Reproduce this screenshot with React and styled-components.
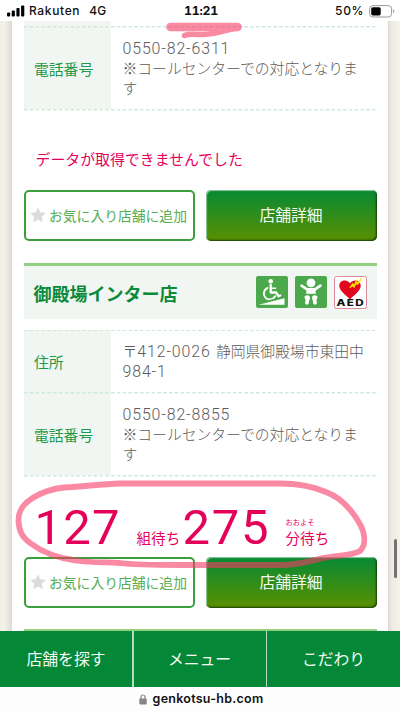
import React from 'react';
import styled, { createGlobalStyle } from 'styled-components';

const Global = createGlobalStyle`
  * { box-sizing: border-box; }
  body { margin: 0; background: #fff; font-family: "Noto Sans CJK JP", sans-serif; font-size: 14.8px; }
`;

const Screen = styled.div`
  position: relative;
  display: flex;
  flex-direction: column;
  width: 400px;
  height: 711px;
  overflow: hidden;
  background: #fff;
`;

const StatusBar = styled.header`
  display: grid;
  grid-template-columns: 1fr auto 1fr;
  align-items: center;
  flex: none;
  height: 21px;
  padding: 1px 5px 0 7px;
  font: 500 12px/20px Inter, sans-serif;
  color: #111;
`;
const Carrier = styled.div`
  display: flex;
  align-items: center;
  letter-spacing: 0.65px;
  span + span { margin-left: 9px; letter-spacing: 0.2px; }
  svg { margin-right: 4px; }
`;
const Clock = styled.div`
  font-weight: 700;
  font-size: 12.3px;
  font-feature-settings: "tnum";
  letter-spacing: -0.25px;
`;
const Power = styled.div`
  display: flex;
  justify-content: flex-end;
  align-items: center;
  gap: 5px;
  letter-spacing: 0.6px;
`;

const Viewport = styled.main`
  flex: none;
  height: 610px;
  overflow: hidden;
  padding: 0 12px;
  background: linear-gradient(90deg, #f3efe8, #f5f2eb 4px, #dedad3 12px, #dedad3 388px, #f0ece5 392px, #f5f2eb);
`;
const Page = styled.div`
  height: 610px;
  padding: 0 11.5px 0 11.5px;
  background: #fff;
`;

const Row = styled.div`
  display: grid;
  grid-template-columns: 87.5px 1fr;
  height: ${p => p.$h}px;
  position: relative;
`;
const DashLine = styled.svg`
  display: block;
  width: 100%;
  height: 1.5px;
  position: absolute;
  top: 0;
  left: 0;
`;
const Label = styled.div`
  display: flex;
  align-items: center;
  padding: 1px 0 0 10.5px;
  background: #f1f6f2;
  color: #1d9a4a;
`;
const Value = styled.div`
  display: flex;
  flex-direction: column;
  justify-content: center;
  padding: 0 0 0 11.5px;
  line-height: 20px;
  color: #5c5c5c;
  font-weight: 300;
  white-space: nowrap;
`;
const Line = styled.div`
  height: 20px;
  word-spacing: 2px;
`;
const Digits = styled.span`
  font-family: Roboto, sans-serif;
  font-size: 15.9px;
  font-weight: 300;
  letter-spacing: 0.88px;
`;

const Notice = styled.p`
  height: 80px;
  margin: 0;
  padding: 0 0 0 12px;
  font-size: 14.9px;
  line-height: 97px;
  color: #e5005a;
`;
const Actions = styled.div`
  display: grid;
  grid-template-columns: 171px 171px;
  justify-content: space-between;
  height: 51px;
`;
const FavoriteButton = styled.button`
  display: flex;
  align-items: center;
  gap: 3.5px;
  padding: 0 0 1px 4px;
  border: 2px solid #3b9f3c;
  border-radius: 5px;
  background: #fff;
  color: #54ad55;
  font: 400 13.8px/20px "Noto Sans CJK JP", sans-serif;
  white-space: nowrap;
  svg { flex: none; }
`;
const DetailButton = styled.button`
  padding: 0 0 1px;
  border: 0;
  border-radius: 5px;
  background: linear-gradient(#068a34, #5a9000);
  box-shadow: inset 1px 1px 1px #8cc99e, inset -1px -1px 2px #143c05;
  color: #f5faf2;
  font: 400 15.8px/20px "Noto Sans CJK JP", sans-serif;
`;

const ShopHeader = styled.div`
  display: flex;
  align-items: center;
  justify-content: space-between;
  height: 56px;
  margin: 21.5px 0 11px;
  padding: 1px 10px 0 10px;
  border-top: 3.5px solid #93cf83;
  background: #f1f6f2;
`;
const ShopName = styled.h2`
  margin: 0;
  font-size: 18px;
  line-height: 26px;
  font-weight: 700;
  color: #0b8a3a;
`;
const Icons = styled.div`
  display: flex;
  gap: 7px;
`;

const WaitInfo = styled.div`
  display: flex;
  align-items: flex-end;
  height: 81px;
  padding-left: 11px;
  color: #e5005a;
`;
const BigNumber = styled.div`
  width: ${p => p.$w}px;
  font: 400 49px/58px Roboto, sans-serif;
  letter-spacing: ${p => p.$tracking}px;
`;
const Unit = styled.div`
  width: ${p => p.$w}px;
  padding-bottom: 8px;
  font-size: 14.6px;
  line-height: 22px;
  white-space: nowrap;
`;
const Ruby = styled.div`
  font-size: 7.3px;
  line-height: 10px;
`;
const NextShopBar = styled.div`
  height: 10px;
  margin-top: 20.5px;
  background: #93cf83;
`;

const Nav = styled.nav`
  display: grid;
  grid-template-columns: 132px 132px 1fr;
  gap: 1.5px;
  flex: none;
  height: 56px;
  background: #b5dcc0;
`;
const NavItem = styled.a`
  display: flex;
  align-items: center;
  justify-content: center;
  padding-bottom: 2px;
  background: #048837;
  color: #f2f9f3;
  font-size: 15.8px;
`;
const AddressBar = styled.footer`
  display: flex;
  align-items: center;
  justify-content: center;
  gap: 6px;
  flex: none;
  height: 24px;
  padding-left: 2px;
  background: #fdfdfd;
  font: 600 12.5px/20px Inter, sans-serif;
  letter-spacing: 0.25px;
  color: #111;
`;
const Scribble = styled.svg`
  position: absolute;
  inset: 0;
  pointer-events: none;
`;
const ScrollThumb = styled.div`
  position: absolute;
  top: 539px;
  left: 393.5px;
  width: 3px;
  height: 39px;
  border-radius: 2px;
  background: #747270;
`;

const Dashes = () => (
  <DashLine>
    <line x1="0" y1=".75" x2="100%" y2=".75" stroke="#cfe9dc" strokeWidth="1.5" strokeDasharray="3.6 2.2" />
  </DashLine>
);

const Star = () => (
  <svg width="16" height="16" viewBox="0 0 16 16">
    <path d="M8 .3 10.3 5.3 15.8 6 11.8 9.8 12.8 15.3 8 12.6 3.2 15.3 4.2 9.8.2 6 5.7 5.3Z" fill="#dcdcdc" />
  </svg>
);

const Wheelchair = () => (
  <svg width="32" height="32" viewBox="0 0 32 32">
    <rect width="32" height="32" rx="2" fill="#4ba84b" />
    <circle cx="14.7" cy="5.3" r="2.3" fill="#fff" />
    <g fill="none" stroke="#fff" strokeLinecap="round" strokeLinejoin="round">
      <path d="M14.7 9v7.5h5.5l2.3 3.8 1.7-.8" strokeWidth="2.3" />
      <path d="M15 12.2h4.5" strokeWidth="1.6" />
      <path d="M11.5 12a6 6 0 1 0 7.7 8.2" strokeWidth="1.9" />
    </g>
    <path d="M2.5 28.7 28.5 22.3V28.7Z" fill="#fff" />
    <path d="M2.5 27.2 21 22.7" stroke="#4ba84b" strokeWidth="1" />
  </svg>
);

const Baby = () => (
  <svg width="32" height="32" viewBox="0 0 32 32">
    <rect width="32" height="32" rx="2" fill="#4ba84b" />
    <circle cx="16" cy="6.8" r="4.4" fill="#fff" />
    <path d="M6.5 9.7 12 13.4H20L25.5 9.7" fill="none" stroke="#fff" strokeWidth="2.6" strokeLinecap="round" strokeLinejoin="round" />
    <path d="M11.3 12.3h9.4v5.5H11.3Z" fill="#fff" />
    <path d="M10 20c2-1.3 4.8-.6 5 1.3.2 1.7-1.1 3-1 5 .1 2.3-2.7 3.4-3.7 1.4-.8-1.7.8-3.1 0-4.5-.7-1.2-1.4-2.2-.3-3.2ZM22 20c-2-1.3-4.8-.6-5 1.3-.2 1.7 1.1 3 1 5-.1 2.3 2.7 3.4 3.7 1.4.8-1.7-.8-3.1 0-4.5.7-1.2 1.4-2.2.3-3.2Z" fill="#fff" />
  </svg>
);

const Aed = () => (
  <svg width="33" height="33" viewBox="0 0 33 33">
    <rect x=".5" y=".5" width="32" height="32" rx="2" fill="#fff" stroke="#dc8a9b" />
    <path d="M16 23.5C13 19.5 5.3 15.6 5.3 9.8 5.3 4 12.7 2.7 16 7.2 19.3 2.7 26.7 4 26.7 9.8 26.7 15.6 19 19.5 16 23.5Z" fill="#e2061f" />
    <path d="M15.8 11.7 18.6 7.3 20.2 9.2 22 4.8 23.8 6.7 27 2.3 25.7 6.6 23.3 8.7 21.8 7.6 20.2 11.6 18.6 10Z" fill="#ffe500" stroke="#ffe500" strokeWidth=".8" />
    <text x="2.5" y="30.4" textLength="28.5" lengthAdjust="spacingAndGlyphs" fontFamily="Inter, sans-serif" fontWeight="800" fontSize="8.5" letterSpacing="1" fill="#111">AED</text>
  </svg>
);

const PhoneRow = ({ number, h }) => (
  <Row $h={h}>
    <Dashes />
    <Label>電話番号</Label>
    <Value>
      <Line><Digits>{number}</Digits></Line>
      <Line>※コールセンターでの対応となりま</Line>
      <Line>す</Line>
    </Value>
  </Row>
);

const ShopActions = () => (
  <Actions>
    <FavoriteButton><Star />お気に入り店舗に追加</FavoriteButton>
    <DetailButton>店舗詳細</DetailButton>
  </Actions>
);

export default function App() {
  return (
    <>
      <Global />
      <Screen>
        <StatusBar>
          <Carrier>
            <svg width="18" height="12" viewBox="0 0 18 12">
              <rect x="0" y="7.5" width="3.2" height="4" rx="1" />
              <rect x="4.7" y="5.5" width="3.2" height="6" rx="1" />
              <rect x="9.4" y="3" width="3.2" height="8.5" rx="1" />
              <rect x="14.1" y=".5" width="3.2" height="11" rx="1" />
            </svg>
            <span>Rakuten</span><span>4G</span>
          </Carrier>
          <Clock>11:21</Clock>
          <Power>
            50%
            <svg width="26" height="13" viewBox="0 0 26 13">
              <rect x=".6" y=".6" width="22" height="11.4" rx="3.3" fill="none" stroke="#999" />
              <rect x="2.2" y="2.2" width="9.5" height="8.2" rx="1.6" />
              <path d="M24.2 4.3c1.5.8 1.5 3.2 0 4Z" fill="#999" />
            </svg>
          </Power>
        </StatusBar>
        <Viewport>
          <Page>
            <Row $h={5}><Label /><Value /></Row>
            <PhoneRow number="0550-82-6311" h={83} />
            <Row $h={1}><Dashes /></Row>
            <Notice>データが取得できませんでした</Notice>
            <ShopActions />
            <ShopHeader>
              <ShopName>御殿場インター店</ShopName>
              <Icons><Wheelchair /><Baby /><Aed /></Icons>
            </ShopHeader>
            <Row $h={62.5}>
              <Dashes />
              <Label>住所</Label>
              <Value>
                <Line>〒<Digits>412-0026</Digits> 静岡県御殿場市東田中</Line>
                <Line><Digits>984-1</Digits></Line>
              </Value>
            </Row>
            <PhoneRow number="0550-82-8855" h={83} />
            <Row $h={1}><Dashes /></Row>
            <WaitInfo>
              <BigNumber $w={102} $tracking={1.2}>127</BigNumber>
              <Unit $w={46}>組待ち</Unit>
              <BigNumber $w={103} $tracking={1.7}>275</BigNumber>
              <Unit $w={60}><Ruby>おおよそ</Ruby>分待ち</Unit>
            </WaitInfo>
            <ShopActions />
            <NextShopBar />
          </Page>
        </Viewport>
        <Nav>
          <NavItem>店舗を探す</NavItem>
          <NavItem>メニュー</NavItem>
          <NavItem>こだわり</NavItem>
        </Nav>
        <AddressBar>
          <svg width="8" height="11" viewBox="0 0 8 11">
            <path d="M2 5V3a2 2 0 0 1 4 0v2" fill="none" stroke="#85858a" strokeWidth="1.2" />
            <rect x=".3" y="4.6" width="7.4" height="6" rx="1" fill="#85858a" />
          </svg>
          genkotsu-hb.com
        </AddressBar>
        <ScrollThumb />
        <Scribble width="400" height="711" viewBox="0 0 400 711" fill="none" stroke="#f73b65" strokeLinecap="round" strokeLinejoin="round">
          <g opacity=".6">
            <path d="M170.5 27H237.5" strokeWidth="8.5" />
            <path d="M237 28C222 31 215 34 204 34.5 196 35 190 33 184.5 35.5" strokeWidth="5.5" />
            <path d="M360 551C366 545 365 535 361 526 354 513 342 498 326 492 312 486 298 483.5 280 483.5H120C103 484 88 486 72 487 61 487 50 489.5 40 494 25 501 18 509 18.5 521 19 531 22 537 30 543 42 552 56 558 76 560.5 92 563 107 562 120 563 135 565 150 565 180 565H280C299 565 310 561 323 558 337 555 352 556 360 551Z" strokeWidth="5.8" />
          </g>
        </Scribble>
      </Screen>
    </>
  );
}
